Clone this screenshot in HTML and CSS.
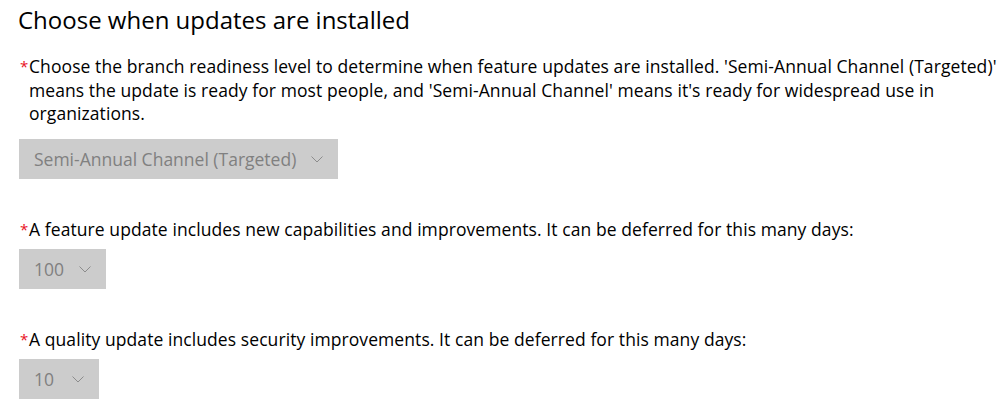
FILE: index.html
```html
<!DOCTYPE html>
<html>
<head>
<meta charset="utf-8">
<link rel="stylesheet" href="styles.css">
</head>
<body>
<div class="page">
  <h1 class="title">Choose when updates are installed</h1>

  <div class="field field-first">
    <div class="label"><span class="req">*</span><span class="label-text">Choose the branch readiness level to determine when feature updates are installed. 'Semi-Annual Channel (Targeted)' means the update is ready for most people, and 'Semi-Annual Channel' means it's ready for widespread use in organizations.</span></div>
    <div class="select">
      <span class="select-value">Semi-Annual Channel (Targeted)</span>
      <svg class="chev" width="12" height="7" viewBox="0 0 12 7"><polyline points="0.5,0.5 6,6 11.5,0.5" fill="none" stroke="#8c8c8c" stroke-width="1"/></svg>
    </div>
  </div>

  <div class="field">
    <div class="label"><span class="req">*</span><span class="label-text">A feature update includes new capabilities and improvements. It can be deferred for this many days:</span></div>
    <div class="select">
      <span class="select-value">100</span>
      <svg class="chev" width="12" height="7" viewBox="0 0 12 7"><polyline points="0.5,0.5 6,6 11.5,0.5" fill="none" stroke="#8c8c8c" stroke-width="1"/></svg>
    </div>
  </div>

  <div class="field">
    <div class="label"><span class="req">*</span><span class="label-text">A quality update includes security improvements. It can be deferred for this many days:</span></div>
    <div class="select">
      <span class="select-value">10</span>
      <svg class="chev" width="12" height="7" viewBox="0 0 12 7"><polyline points="0.5,0.5 6,6 11.5,0.5" fill="none" stroke="#8c8c8c" stroke-width="1"/></svg>
    </div>
  </div>
</div>
</body>
</html>
```

FILE: styles.css
```css
html, body {
  margin: 0;
  padding: 0;
  background: #ffffff;
}

body {
  font-family: "Open Sans", "Noto Sans", sans-serif;
  color: #000000;
  overflow: hidden;
}

.page {
  padding: 3px 0 0 19px;
  width: 985px;
}

.title {
  margin: 0 0 0 -1px;
  font-size: 24px;
  font-weight: 400;
  line-height: 34px;
}

.field {
  margin-top: 39px;
}

.field-first {
  margin-top: 18px;
}

.label {
  display: flex;
  align-items: flex-start;
  font-size: 17.5px;
  line-height: 23.5px;
  letter-spacing: 0.08px;
}

.req {
  color: #e81123;
  font-size: 15px;
  width: 9px;
  flex: none;
  padding-left: 1px;
}

.label-text {
  flex: 1;
}

.select {
  display: inline-flex;
  align-items: center;
  justify-content: space-between;
  gap: 15px;
  box-sizing: border-box;
  min-width: 80px;
  height: 40px;
  margin-top: 13px;
  padding: 0 15px 0 15px;
  background: #cccccc;
  color: #808080;
  font-size: 17.5px;
}

.field + .field .select {
  margin-top: 7.5px;
}

.chev {
  flex: none;
  display: block;
  margin-top: 1px;
}
```
